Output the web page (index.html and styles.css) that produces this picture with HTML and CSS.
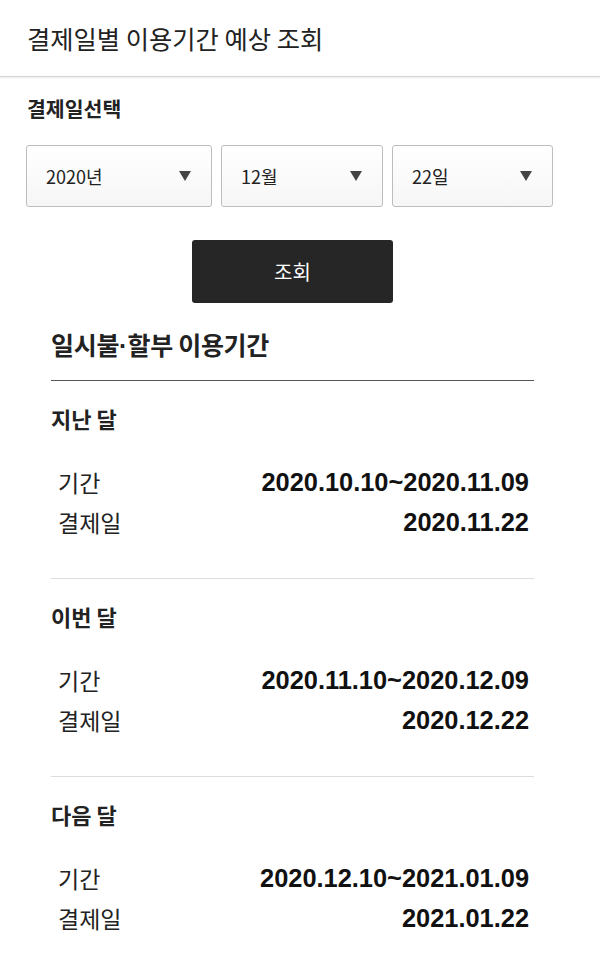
FILE: index.html
```html
<!DOCTYPE html>
<html>
<head>
  <meta name="viewport" content="width=device-width, initial-scale=1.0">
  <title>결제일별 이용기간 예상 조회</title>
  <link rel="stylesheet" href="styles.css">
</head>
<body>

  <header class="top-bar">
    <h1>결제일별 이용기간 예상 조회</h1>
  </header>

  <div class="content">
    <h2 class="form-label">결제일선택</h2>

    <div class="select-row">
      <div class="select-box"><span>2020년</span><i class="arrow"></i></div>
      <div class="select-box"><span>12월</span><i class="arrow"></i></div>
      <div class="select-box"><span>22일</span><i class="arrow"></i></div>
    </div>

    <div class="btn-wrap">
      <button class="btn-search">조회</button>
    </div>

    <section class="result">
      <h3 class="result-title">일시불<span class="dot">·</span>할부 이용기간</h3>

      <div class="group">
        <h4>지난 달</h4>
        <div class="row"><span class="label">기간</span><span class="value">2020.10.10~2020.11.09</span></div>
        <div class="row"><span class="label">결제일</span><span class="value">2020.11.22</span></div>
      </div>

      <div class="group">
        <h4>이번 달</h4>
        <div class="row"><span class="label">기간</span><span class="value">2020.11.10~2020.12.09</span></div>
        <div class="row"><span class="label">결제일</span><span class="value">2020.12.22</span></div>
      </div>

      <div class="group">
        <h4>다음 달</h4>
        <div class="row"><span class="label">기간</span><span class="value">2020.12.10~2021.01.09</span></div>
        <div class="row"><span class="label">결제일</span><span class="value">2021.01.22</span></div>
      </div>
    </section>
  </div>

</body>
</html>
```

FILE: styles.css
```css
* { box-sizing: border-box; }
body {
  margin: 0;
  font-family: "Noto Sans CJK KR", "Noto Sans", sans-serif;
  color: #222;
  background-color: #fff;
}
h1, h2, h3, h4 { margin: 0; }

.top-bar {
  height: 77px;
  padding: 0 27px;
  display: flex;
  align-items: center;
  border-bottom: 1px solid #d4d4d4;
  box-shadow: 0 1px 2px rgba(0, 0, 0, 0.08);
}
.top-bar h1 {
  font-size: 25.3px;
  font-weight: 400;
  color: #222;
}

.content {
  padding: 17px 41px 0 26px;
}
.form-label {
  font-size: 20.5px;
  font-weight: 700;
  line-height: 28px;
  padding-left: 1px;
}

.select-row {
  display: grid;
  grid-template-columns: 186px 162px 161px;
  column-gap: 9px;
  margin-top: 23px;
}
.select-box {
  height: 62px;
  display: flex;
  align-items: center;
  justify-content: space-between;
  padding: 0 20px 0 19px;
  border: 1px solid #bdbdbd;
  border-radius: 3px;
  background: linear-gradient(#fff, #f6f6f6);
  font-size: 18px;
  color: #222;
}
.select-box .arrow {
  width: 0;
  height: 0;
  border-left: 6px solid transparent;
  border-right: 6px solid transparent;
  border-top: 10px solid #444;
}

.btn-wrap {
  display: flex;
  justify-content: center;
  margin-top: 33px;
}
.btn-search {
  width: 201px;
  height: 63px;
  border: none;
  border-radius: 3px;
  background-color: #262626;
  color: #fff;
  font-family: inherit;
  font-size: 20px;
}

.result {
  margin: 24px 25px 0 25px;
}
.result-title {
  font-size: 25px;
  font-weight: 700;
  line-height: 34px;
  letter-spacing: -0.3px;
  padding-bottom: 17px;
  border-bottom: 1px solid #555;
}
.result-title .dot {
  font-family: "Liberation Sans", Arial, sans-serif;
  letter-spacing: 0;
}

.group {
  padding: 23px 0 36px 0;
  border-bottom: 1px solid #ddd;
}
.group:last-child { border-bottom: none; }
.group h4 {
  font-size: 22px;
  font-weight: 700;
  line-height: 28px;
  margin-bottom: 30px;
}
.row {
  display: flex;
  justify-content: space-between;
  align-items: center;
  height: 40px;
  padding: 0 5px 0 7px;
}
.label {
  font-size: 23px;
}
.value {
  font-family: "Liberation Sans", Arial, sans-serif;
  font-weight: 700;
  font-size: 25.4px;
  color: #111;
}
```
